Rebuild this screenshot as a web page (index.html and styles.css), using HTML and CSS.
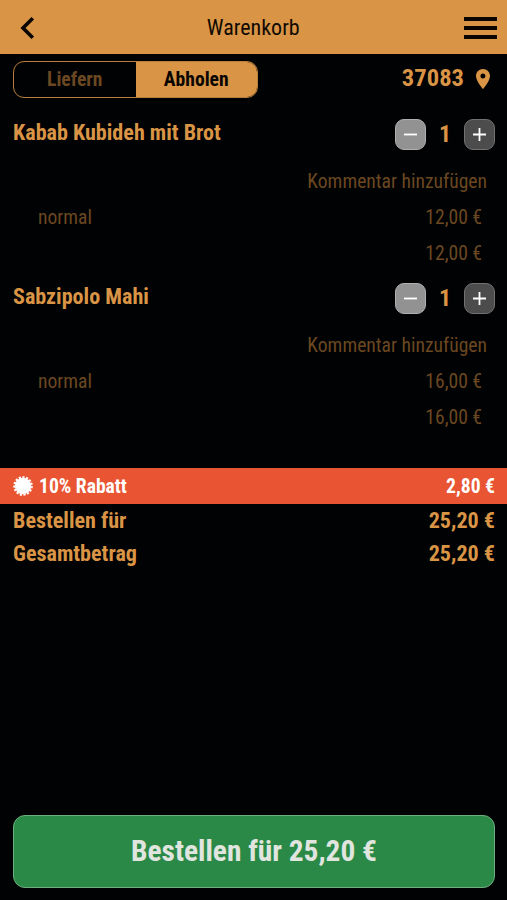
FILE: index.html
```html
<!DOCTYPE html>
<html lang="de">
<head>
	<meta charset="utf-8">
	<title>Warenkorb</title>
	<link rel="stylesheet" href="styles.css">
</head>
<body>
	<div class="header">
		<svg class="back" width="16" height="24" viewBox="0 0 16 24"><path d="M13.800 2.200L4 12l9.800 9.800"/></svg>
		<h1>Warenkorb</h1>
		<div class="menu"><i></i><i></i><i></i></div>
	</div>
	<div class="main">
		<div class="top">
			<div class="switch">
				<div class="tab"><span>Liefern</span></div>
				<div class="tab active"><span>Abholen</span></div>
			</div>
			<div class="place">
				<span>37083</span>
				<svg width="14" height="20" viewBox="5 2 14 20"><path d="M12 2C8.13 2 5 5.13 5 9c0 5.25 7 13 7 13s7-7.75 7-13c0-3.87-3.13-7-7-7zm0 9.5a2.5 2.5 0 1 1 0-5 2.5 2.5 0 0 1 0 5z"/></svg>
			</div>
		</div>
		<div class="item">
			<div class="itemHead">
				<span class="name">Kabab Kubideh mit Brot</span>
				<div class="amount">
					<div class="btn minus"><svg width="29" height="29" viewBox="0 0 29 29"><path d="M8 14.500h13"/></svg></div>
					<span class="num">1</span>
					<div class="btn plus"><svg width="29" height="29" viewBox="0 0 29 29"><path d="M8 14.500h13M14.500 8v13"/></svg></div>
				</div>
			</div>
			<div class="comment"><span>Kommentar hinzufügen</span></div>
			<div class="row"><span>normal</span><span class="price">12,00 €</span></div>
			<div class="row"><span></span><span class="price">12,00 €</span></div>
		</div>
		<div class="item">
			<div class="itemHead">
				<span class="name">Sabzipolo Mahi</span>
				<div class="amount">
					<div class="btn minus"><svg width="29" height="29" viewBox="0 0 29 29"><path d="M8 14.500h13"/></svg></div>
					<span class="num">1</span>
					<div class="btn plus"><svg width="29" height="29" viewBox="0 0 29 29"><path d="M8 14.500h13M14.500 8v13"/></svg></div>
				</div>
			</div>
			<div class="comment"><span>Kommentar hinzufügen</span></div>
			<div class="row"><span>normal</span><span class="price">16,00 €</span></div>
			<div class="row"><span></span><span class="price">16,00 €</span></div>
		</div>
	</div>
	<div class="rabatt">
		<svg width="20" height="20" viewBox="-10 -10 20 20"><circle r="8.200"/><circle class="teeth" r="8.700"/></svg>
		<span class="label">10% Rabatt</span>
		<span class="price">2,80 €</span>
	</div>
	<div class="total"><span>Bestellen für</span><span class="price">25,20 €</span></div>
	<div class="total"><span>Gesamtbetrag</span><span class="price">25,20 €</span></div>
	<div class="order"><span>Bestellen für 25,20 €</span></div>
</body>
</html>
```
FILE: styles.css
```css
*{box-sizing: border-box}
body{
	margin: 0;
	height: 900px;
	display: flex;
	flex-direction: column;
	overflow: hidden;
	background-color: #010203;
	color: #d99445;
	font-family: "Roboto Condensed","Roboto",sans-serif;
	font-stretch: 75%;
	font-size: 19.6px;
}
span,h1{white-space: nowrap}
.header{
	height: 54px;
	flex: none;
	padding: 2px 10.5px 0 19px;
	display: grid;
	grid-template-columns: 24px 1fr 33px;
	align-items: center;
	background-color: #d99445;
	color: #110a03;
}
.header h1{
	margin: 0;
	padding-bottom: 2px;
	font-size: 22px;
	font-weight: 400;
	text-align: center;
}
.back path{
	fill: none;
	stroke: #090501;
	stroke-width: 3.6;
}
.menu{
	display: flex;
	flex-direction: column;
	gap: 5px;
}
.menu i{
	height: 4px;
	background-color: #090501;
}
.main{
	height: 414px;
	flex: none;
}
.top{
	height: 50px;
	padding: 7px 17px 0 13px;
	display: flex;
	justify-content: space-between;
	align-items: flex-start;
}
.switch{
	width: 245px;
	height: 37px;
	display: flex;
	border: 1px solid #b97e3b;
	border-radius: 11px;
	overflow: hidden;
	font-weight: 700;
}
.tab{
	flex: 1;
	display: flex;
	align-items: center;
	justify-content: center;
	color: #6b4821;
}
.active{
	background-color: #d99445;
	color: #090501;
}
.place{
	height: 36px;
	display: flex;
	align-items: center;
	gap: 12px;
	font-size: 24.6px;
	line-height: 30px;
	font-weight: 700;
}
.place span{padding-bottom: 2px}
.place svg{fill: #d99445}
.item{height: 164px}
.itemHead{
	height: 60px;
	padding: 14.5px 12px 0 13px;
	display: flex;
	justify-content: space-between;
	align-items: flex-start;
	font-size: 22.1px;
	font-weight: 700;
}
.name{line-height: 26px}
.amount{
	display: flex;
	align-items: center;
}
.num{
	width: 38px;
	text-align: center;
	font-size: 24px;
	line-height: 30px;
}
.btn{
	width: 31px;
	height: 31px;
	border: 1px solid #727272;
	border-radius: 9px;
	background-color: #4c4c4c;
}
.btn svg{display: block}
.btn path{
	stroke: #fff;
	stroke-width: 1.8;
}
.minus{
	background-color: #929292;
	border-color: #b0b0b0;
}
.comment{
	height: 35px;
	padding-right: 20px;
	text-align: right;
	line-height: 36px;
	color: #6b4821;
}
.row{
	height: 36px;
	padding: 0 25px 0 38px;
	display: flex;
	justify-content: space-between;
	line-height: 38px;
	color: #6b4821;
}
.rabatt{
	height: 36px;
	flex: none;
	padding: 0 12px 0 13px;
	display: flex;
	align-items: center;
	background-color: #e95533;
	color: #fff;
	font-weight: 700;
}
.rabatt svg{
	margin-right: 6px;
	fill: #fff;
}
.rabatt .teeth{
	fill: none;
	stroke: #fff;
	stroke-width: 2.2;
	stroke-dasharray: 2.2 1.444;
}
.label{flex: 1}
.total{
	height: 33px;
	flex: none;
	padding: 0 12px 0 13px;
	display: flex;
	justify-content: space-between;
	line-height: 32px;
	font-size: 22.1px;
	font-weight: 700;
}
.order{
	height: 73px;
	flex: none;
	margin: auto 12px 12px 13px;
	padding-bottom: 2px;
	display: flex;
	align-items: center;
	justify-content: center;
	border: 1px solid #6fae80;
	border-radius: 12px;
	background-color: #2a8947;
	color: #e0e5df;
	font-size: 29.4px;
	font-weight: 700;
}
```
